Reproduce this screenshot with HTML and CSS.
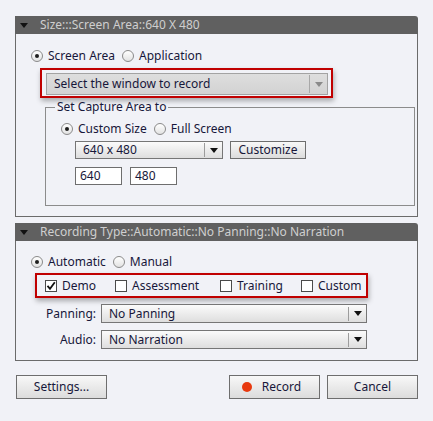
FILE: index.html
```html
<!DOCTYPE html>
<html>
<head>
<meta charset="utf-8">
<link rel="stylesheet" href="styles.css">
</head>
<body>
<div class="dialog">
  <section class="panel">
    <div class="panel-head"><span class="tri"></span><span>Size:::Screen Area::640 X 480</span></div>
    <div class="panel-body body1">
      <div class="radio-row row1">
        <span class="radio"><span class="rb on"></span>Screen Area</span>
        <span class="radio"><span class="rb"></span>Application</span>
      </div>
      <div class="hl hl1">
        <div class="select disabled"><span class="val">Select the window to record</span><span class="arrow grey"><span class="caret"></span></span></div>
      </div>
      <fieldset class="capture">
        <legend>Set Capture Area to</legend>
        <div class="radio-row row2">
          <span class="radio"><span class="rb on"></span>Custom Size</span>
          <span class="radio"><span class="rb"></span>Full Screen</span>
        </div>
        <div class="size-row">
          <div class="select size"><span class="val">640 x 480</span><span class="arrow"><span class="caret"></span></span></div>
          <span class="btn small">Customize</span>
        </div>
        <div class="inputs">
          <span class="field">640</span>
          <span class="field">480</span>
        </div>
      </fieldset>
    </div>
  </section>

  <section class="panel panel2">
    <div class="panel-head"><span class="tri"></span><span>Recording Type::Automatic::No Panning::No Narration</span></div>
    <div class="panel-body body2">
      <div class="radio-row row3">
        <span class="radio"><span class="rb on"></span>Automatic</span>
        <span class="radio"><span class="rb"></span>Manual</span>
      </div>
      <div class="hl hl2">
        <span class="check c-demo"><span class="cb on"><svg viewBox="0 0 10 10" width="10" height="10"><path d="M1.5 4.8 L4 7.8 L8.8 1.2" fill="none" stroke="#111" stroke-width="1.8"/></svg></span>Demo</span>
        <span class="check c-assess"><span class="cb"></span>Assessment</span>
        <span class="check c-train"><span class="cb"></span>Training</span>
        <span class="check c-custom"><span class="cb"></span>Custom</span>
      </div>
      <div class="form-grid">
        <span class="lbl">Panning:</span>
        <div class="select long"><span class="val">No Panning</span><span class="arrow"><span class="caret"></span></span></div>
        <span class="lbl">Audio:</span>
        <div class="select long"><span class="val">No Narration</span><span class="arrow"><span class="caret"></span></span></div>
      </div>
    </div>
  </section>

  <div class="actions">
    <span class="btn big">Settings...</span>
    <span class="spacer"></span>
    <span class="btn big rec"><span class="dot"></span>Record</span>
    <span class="btn big">Cancel</span>
  </div>
</div>
</body>
</html>
```
FILE: styles.css
```css
* { box-sizing: border-box; }
body {
  margin: 0;
  background: #f1f2f7;
  font-family: "Noto Sans", "Liberation Sans", Arial, sans-serif;
  font-size: 12px;
  line-height: 14px;
  color: #17173a;
}
.dialog {
  padding: 16px 0 0 15px;
  width: 418px;
}
.panel-head {
  height: 18px;
  background: #606060;
  color: #cfcfcf;
  display: flex;
  align-items: center;
  padding-left: 5px;
  border-top-right-radius: 3px;
}
.tri {
  width: 0;
  height: 0;
  border-left: 4px solid transparent;
  border-right: 4px solid transparent;
  border-top: 5px solid #111;
  margin-right: 12px;
}
.panel-body {
  border: 1px solid #6b6b6b;
  border-top: 0;
}
.body1 { padding: 15px 2px 10px 15px; }
.panel2 { margin-top: 6px; }
.body2 { padding: 14px 2px 11px 15px; }

.radio-row {
  display: flex;
  align-items: center;
  height: 14px;
  gap: 7px;
}
.radio {
  display: flex;
  align-items: center;
  gap: 5px;
}
.rb {
  width: 12px;
  height: 12px;
  border-radius: 50%;
  border: 1px solid #8a8a8a;
  background: linear-gradient(#ffffff, #e2e2e2);
  position: relative;
  flex: none;
}
.rb.on::after {
  content: "";
  position: absolute;
  left: 3px;
  top: 3px;
  width: 4px;
  height: 4px;
  border-radius: 50%;
  background: #1e1e1e;
}

.hl {
  border: 2px solid #c00000;
  box-shadow: 1px 3px 5px rgba(0, 0, 0, 0.3);
}
.hl1 {
  margin: 5px 0 2px 9px;
  width: 293px;
  height: 30px;
  padding: 3px 3px 1px 4px;
}
.select {
  display: flex;
  align-items: center;
  height: 18px;
  border: 1px solid #767676;
  background: linear-gradient(#fbfbfb, #dedede);
}
.select .val {
  flex: 1;
  padding-left: 7px;
  white-space: nowrap;
}
.arrow {
  width: 18px;
  height: 14px;
  border-left: 1px solid #9c9c9c;
  display: flex;
  align-items: center;
  justify-content: center;
}
.caret {
  width: 0;
  height: 0;
  border-left: 4px solid transparent;
  border-right: 4px solid transparent;
  border-top: 5px solid #111;
}
.select.disabled {
  height: 22px;
  border-color: #a3a3a3;
  background: linear-gradient(#dedede, #d2d2d2);
}
.select.disabled .arrow {
  height: 18px;
  border-left-color: #a8a8a8;
}
.arrow.grey .caret { border-top-color: #8a8a8a; }

.capture {
  margin: 0 0 0 14px;
  width: 370px;
  border: 1px solid #8c8c8c;
  padding: 0 0 20px 15px;
}
.capture legend {
  padding: 0 2px;
  margin-left: -6px;
  line-height: 14px;
}
.row2 { margin-top: 8px; }
.size-row {
  display: flex;
  gap: 7px;
  margin: 5px 0 0 14px;
}
.select.size { width: 148px; }
.btn {
  display: flex;
  align-items: center;
  justify-content: center;
  border: 1px solid #6e6e6e;
  background: linear-gradient(#f8f8f8, #dcdcdc);
}
.btn.small {
  width: 76px;
  height: 18px;
}
.inputs {
  display: flex;
  gap: 8px;
  margin: 8px 0 0 14px;
}
.field {
  width: 47px;
  height: 18px;
  border: 1px solid #6e6e6e;
  background: #fff;
  padding-left: 4px;
  display: flex;
  align-items: center;
}

.hl2 {
  margin: 4px 0 0 4px;
  width: 333px;
  height: 25px;
  display: flex;
  align-items: center;
  padding: 1px 0 0 8px;
}
.check {
  display: flex;
  align-items: center;
  gap: 5px;
}
.cb {
  width: 12px;
  height: 12px;
  border: 1px solid #4a4a4a;
  background: #fff;
  display: flex;
  align-items: center;
  justify-content: center;
  flex: none;
}
.c-demo { width: 70px; }
.c-assess { width: 105px; }
.c-train { width: 81px; }

.form-grid {
  display: grid;
  grid-template-columns: 50px 266px;
  column-gap: 5px;
  row-gap: 7px;
  margin: 6px 0 0 15px;
  align-items: center;
}
.lbl { text-align: right; }
.select.long { height: 19px; }

.actions {
  display: flex;
  margin-top: 14px;
  gap: 7px;
  padding-left: 1px;
}
.spacer { flex: 1; }
.btn.big {
  width: 91px;
  height: 24px;
}
.rec { gap: 10px; padding-right: 6px; }
.dot {
  width: 10px;
  height: 10px;
  border-radius: 50%;
  background: #e8390e;
}
```
